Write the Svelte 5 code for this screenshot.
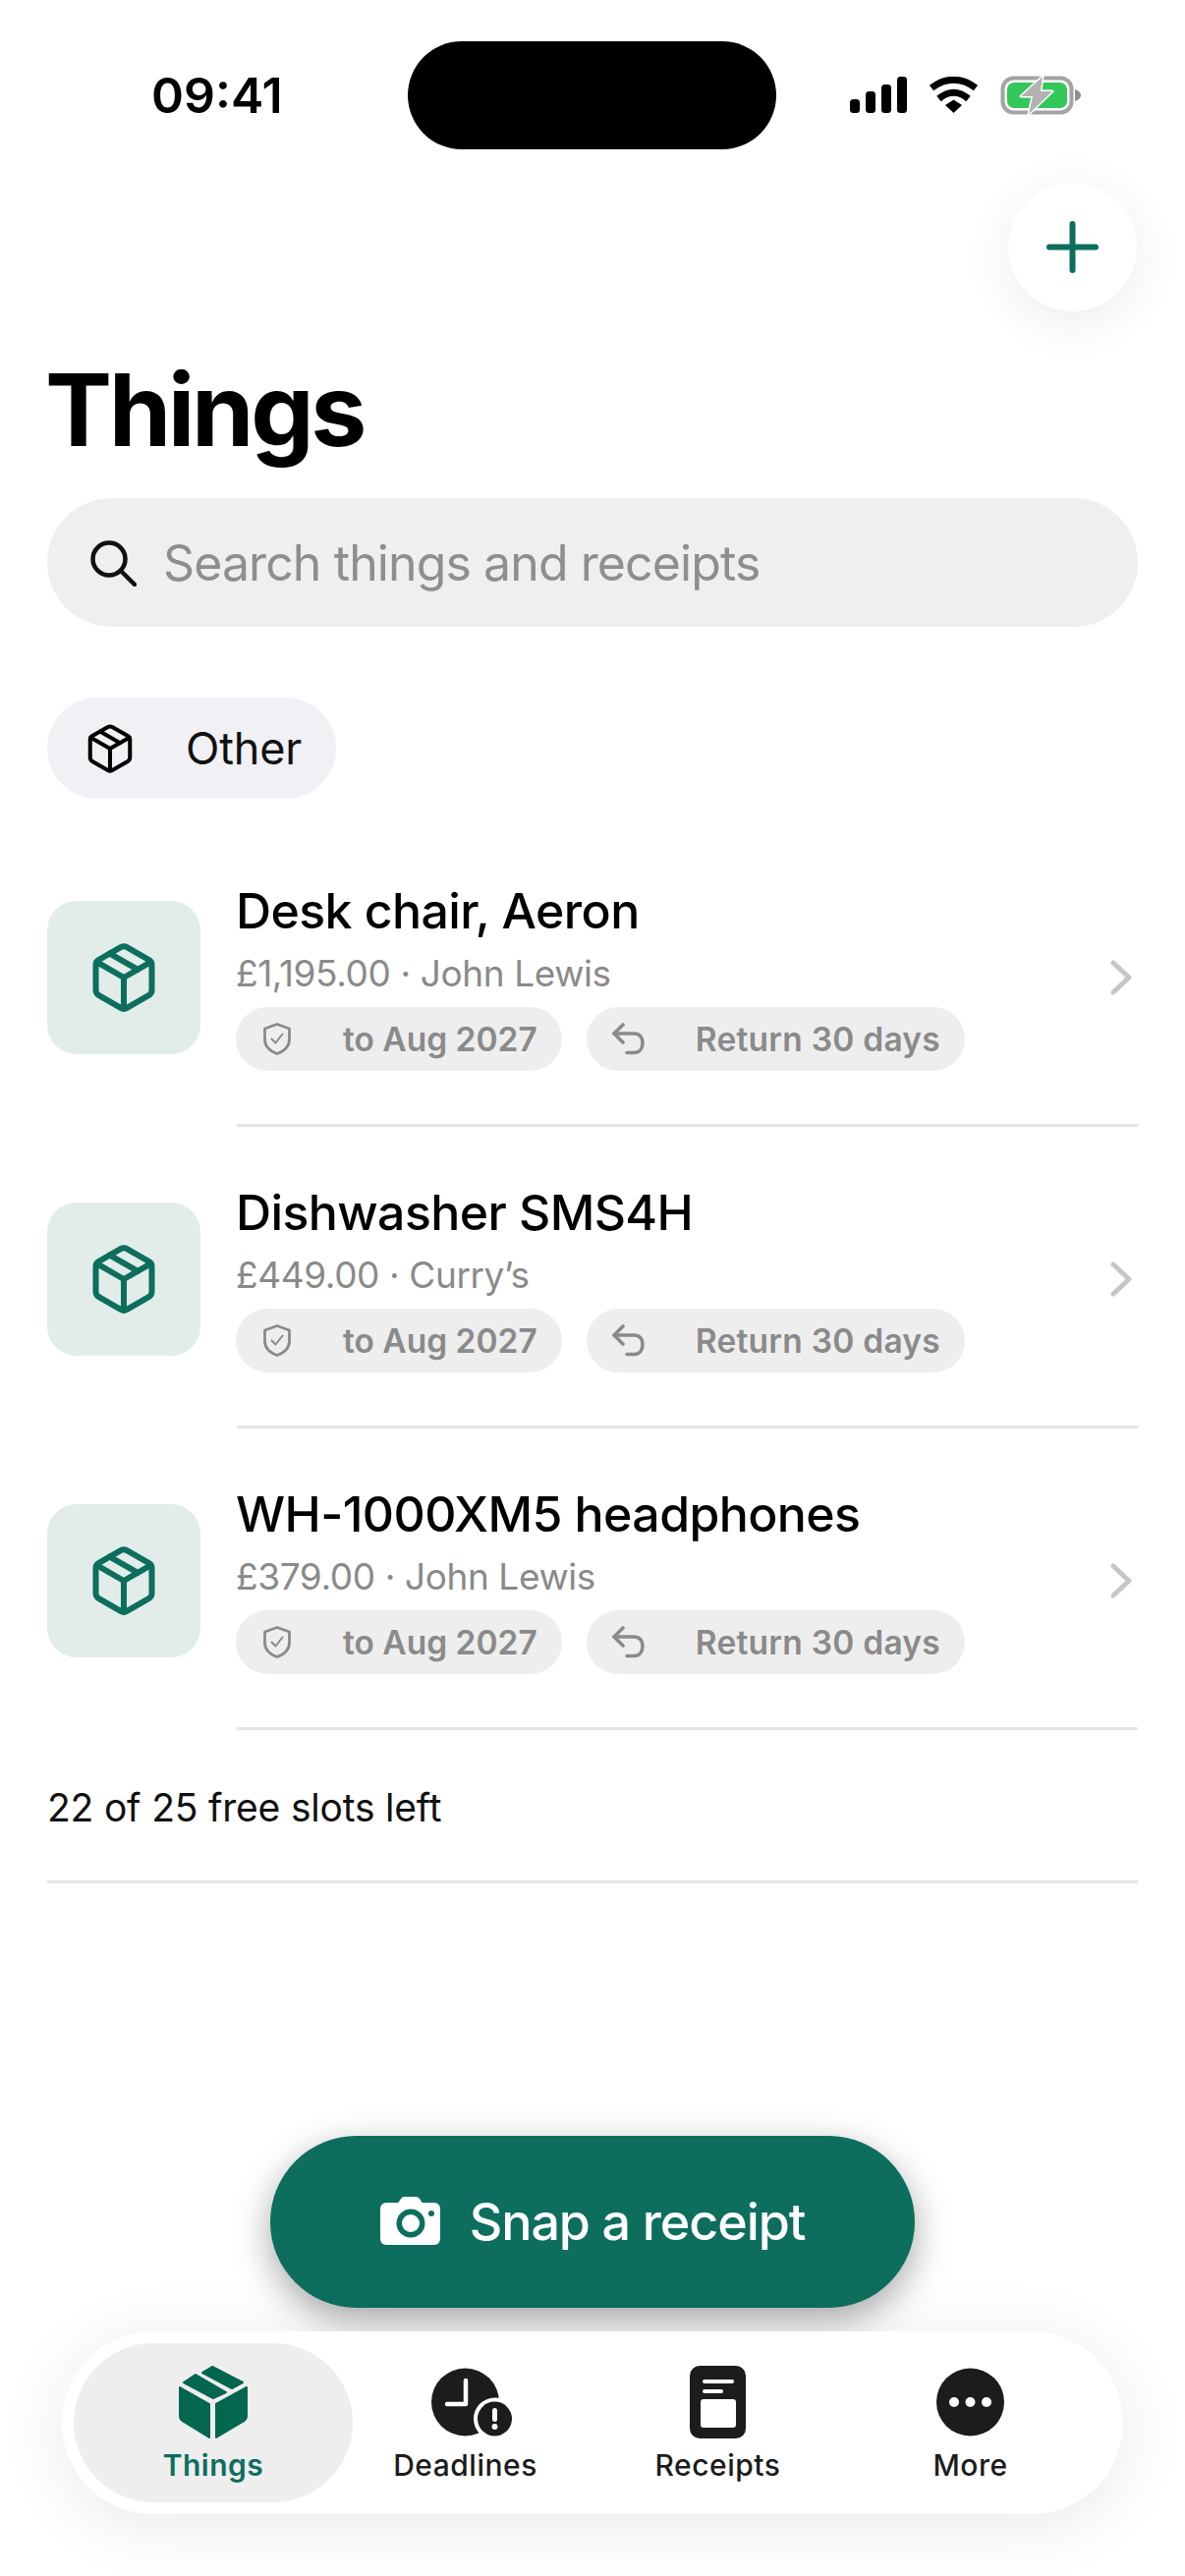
<script lang="ts">
  interface Thing {
    name: string;
    price: string;
    shop: string;
  }

  const things: Thing[] = [
    { name: 'Desk chair, Aeron', price: '£1,195.00', shop: 'John Lewis' },
    { name: 'Dishwasher SMS4H', price: '£449.00', shop: 'Curry’s' },
    { name: 'WH-1000XM5 headphones', price: '£379.00', shop: 'John Lewis' }
  ];
</script>

{#snippet box(cls: string)}
  <svg class={cls} viewBox="0 0 24 24" fill="none" stroke="currentColor" stroke-linecap="round" stroke-linejoin="round">
    <path d="M11 21.73a2 2 0 0 0 2 0l7-4A2 2 0 0 0 21 16V8a2 2 0 0 0-1-1.73l-7-4a2 2 0 0 0-2 0l-7 4A2 2 0 0 0 3 8v8a2 2 0 0 0 1 1.73z" />
    <path d="M12 22V12" />
    <path d="m3.3 7 8.7 5 8.7-5" />
    <path d="m7.5 4.27 9 5.15" />
  </svg>
{/snippet}

<div class="phone">
  <!-- Status bar -->
  <header class="status">
    <div class="time">09:41</div>
    <div class="island"></div>
    <div class="status-icons">
      <svg class="signal" viewBox="0 0 58 37" fill="#000">
        <rect x="0" y="23" width="10" height="14" rx="3.5" />
        <rect x="16" y="15" width="10" height="22" rx="3.5" />
        <rect x="32" y="8" width="10" height="29" rx="3.5" />
        <rect x="48" y="0" width="10" height="37" rx="3.5" />
      </svg>
      <svg class="wifi" viewBox="0 0 51 37" fill="none" stroke="#000" stroke-width="7">
        <path d="M3 11.5Q25.5 -5 48 11.5" />
        <path d="M10.5 22.5Q25.5 10 40.5 22.5" />
        <path d="M17 29 25.5 23.5 34 29 25.5 37Z" fill="#000" stroke="none" />
      </svg>
      <svg class="battery" viewBox="0 0 82 40">
        <rect x="2.5" y="2.5" width="70" height="35" rx="11" fill="none" stroke="#a3a3a3" stroke-width="4" />
        <rect x="7" y="7" width="61" height="26" rx="7" fill="#34c759" />
        <path d="M76 14Q82 16 82 20Q82 24 76 26Z" fill="#8f8f8f" />
        <path d="M43 1 21 21H33L29 39 53 16H41Z" fill="#b2b2b2" stroke="#fff" stroke-width="3" stroke-linejoin="round" paint-order="stroke" />
      </svg>
    </div>
  </header>

  <div class="top-actions">
    <button class="add" aria-label="Add">
      <svg viewBox="0 0 53 53" fill="none" stroke="currentColor" stroke-width="6" stroke-linecap="round">
        <path d="M26.5 3V50M3 26.5H50" />
      </svg>
    </button>
  </div>

  <h1 class="title">Things</h1>

  <div class="search">
    <svg viewBox="0 0 48 48" fill="none" stroke="#111" stroke-width="4.5" stroke-linecap="round">
      <circle cx="20" cy="20" r="16.5" />
      <path d="M32 32 46 46" />
    </svg>
    <span>Search things and receipts</span>
  </div>

  <div class="chip">
    {@render box('chip-icon')}
    <span>Other</span>
  </div>

  <!-- Things list -->
  <div class="list">
    {#each things as thing}
      <div class="row">
        <div class="row-main">
          <div class="thumb">{@render box('thumb-icon')}</div>
          <div class="info">
            <div class="name">{thing.name}</div>
            <div class="sub">{thing.price} · {thing.shop}</div>
            <div class="pills">
              <div class="pill">
                <svg viewBox="0 0 28 33" fill="none" stroke="currentColor" stroke-width="2.8" stroke-linejoin="round" stroke-linecap="round">
                  <path d="M14 1.5 26.5 6V17C26.5 24 21 29 14 31.5 7 29 1.5 24 1.5 17V6Z" />
                  <path d="M8.5 16.5 12.5 20.5 19.5 11.5" stroke-width="2" />
                </svg>
                <span>to Aug 2027</span>
              </div>
              <div class="pill return">
                <svg viewBox="0 0 34 33" fill="none" stroke="currentColor" stroke-width="3.6" stroke-linejoin="round" stroke-linecap="round">
                  <path d="M12 2 3 11 12 20" />
                  <path d="M3 11H23C29 11 32 15 32 20.5S29 30.5 23 30.5H16" />
                </svg>
                <span>Return 30 days</span>
              </div>
            </div>
          </div>
          <svg class="chevron" viewBox="0 0 22 36" fill="none" stroke="#c6c6c6" stroke-width="5" stroke-linecap="round" stroke-linejoin="round">
            <path d="M3 3 19 18 3 33" />
          </svg>
        </div>
        <div class="divider"></div>
      </div>
    {/each}
  </div>

  <div class="slots">22 of 25 free slots left</div>

  <!-- Bottom actions -->
  <div class="bottom">
    <button class="snap">
      <svg viewBox="0 0 61 49">
        <rect x="0" y="6" width="61" height="43" rx="6" fill="#fff" />
        <path d="M17 8 21 2Q22 0 25 0H36Q39 0 40 2L44 8Z" fill="#fff" />
        <circle cx="31" cy="27" r="14.5" fill="#0d6e5e" />
        <circle cx="31" cy="27" r="9" fill="#fff" />
        <circle cx="52" cy="17" r="3" fill="#0d6e5e" />
      </svg>
      <span>Snap a receipt</span>
    </button>

    <nav class="tabs">
      <div class="tab active">
        <svg class="t-things" viewBox="0 0 70 74" fill="#03664f" stroke="#03664f" stroke-width="2" stroke-linejoin="round">
          <path d="M24 7 34 1 65 17 54 23Z" />
          <path d="M5 17 17 9 48 27 35 33Z" />
          <path d="M1 22 31 39V73L5 57Q1 55 1 51Z" />
          <path d="M69 22 38 39V73L65 57Q69 55 69 51Z" />
        </svg>
        <span>Things</span>
      </div>
      <div class="tab">
        <svg class="t-clock" viewBox="0 0 69 70">
          <circle cx="34.5" cy="35" r="34.5" fill="#1c1c1c" />
          <path d="M35 13V37H16" fill="none" stroke="#fff" stroke-width="4.5" stroke-linecap="round" stroke-linejoin="round" />
          <circle cx="64.5" cy="52" r="21.5" fill="#fff" />
          <circle cx="64.5" cy="52" r="17.5" fill="#1c1c1c" />
          <rect x="62" y="41" width="5" height="14" rx="2.5" fill="#fff" />
          <circle cx="64.5" cy="60" r="3" fill="#fff" />
        </svg>
        <span>Deadlines</span>
      </div>
      <div class="tab">
        <svg class="t-receipt" viewBox="0 0 57 74">
          <rect x="0" y="0" width="57" height="74" rx="10" fill="#1c1c1c" />
          <rect x="13" y="14" width="32" height="4" rx="2" fill="#fff" />
          <rect x="13" y="24" width="21" height="4" rx="2" fill="#fff" />
          <rect x="11" y="34" width="36" height="29" rx="3" fill="#fff" />
        </svg>
        <span>Receipts</span>
      </div>
      <div class="tab">
        <svg class="t-more" viewBox="0 0 69 70">
          <circle cx="34.5" cy="35" r="34.5" fill="#1c1c1c" />
          <circle cx="18" cy="35" r="5" fill="#fff" />
          <circle cx="34.5" cy="35" r="5" fill="#fff" />
          <circle cx="51" cy="35" r="5" fill="#fff" />
        </svg>
        <span>More</span>
      </div>
    </nav>
  </div>
</div>

<style>
  :global(body) {
    margin: 0;
    background: #fff;
  }

  .phone {
    width: 1206px;
    height: 2622px;
    background: #fff;
    overflow: hidden;
    display: flex;
    flex-direction: column;
    font-family: Inter, 'Noto Sans', sans-serif;
    color: #000;
  }

  /* Status bar */
  .status {
    display: flex;
    align-items: center;
    height: 110px;
    margin-top: 42px;
    flex: none;
  }

  .time {
    width: 415px;
    box-sizing: border-box;
    padding-left: 154px;
    font-size: 50px;
    font-weight: 600;
    line-height: 1;
  }

  .island {
    width: 375px;
    height: 110px;
    border-radius: 55px;
    background: #000;
  }

  .status-icons {
    display: flex;
    align-items: flex-start;
    margin-left: 75px;
  }

  .signal {
    width: 58px;
    height: 37px;
  }

  .wifi {
    width: 51px;
    height: 37px;
    margin-left: 22px;
  }

  .battery {
    width: 82px;
    height: 40px;
    margin-left: 22px;
    margin-top: -1px;
  }

  .top-actions {
    display: flex;
    justify-content: flex-end;
    padding: 34px 49px 0 0;
  }

  .add {
    width: 131px;
    height: 131px;
    border: none;
    border-radius: 50%;
    background: #fff;
    color: #0d6e5e;
    padding: 0;
    display: flex;
    align-items: center;
    justify-content: center;
    box-shadow: 0 10px 50px rgba(0, 0, 0, 0.08);
  }

  .add svg {
    width: 53px;
    height: 53px;
  }

  .title {
    margin: 38px 0 0 46px;
    font-size: 102px;
    font-weight: 700;
    line-height: 124px;
    letter-spacing: -3.4px;
  }

  .search {
    margin: 28px 48px 0;
    height: 131px;
    border-radius: 66px;
    background: #efefef;
    display: flex;
    align-items: center;
    flex: none;
  }

  .search svg {
    width: 48px;
    height: 48px;
    margin-left: 43px;
  }

  .search span {
    margin-left: 27px;
    font-size: 50px;
    letter-spacing: -0.9px;
    color: #8e8e8e;
  }

  .chip {
    margin: 72px 0 0 48px;
    width: 294px;
    height: 103px;
    border-radius: 52px;
    background: #f1f1f5;
    display: flex;
    align-items: center;
    flex: none;
  }

  .chip span {
    margin-left: 50px;
    font-size: 45px;
    letter-spacing: -0.2px;
    color: #111;
  }

  :global(.chip-icon) {
    width: 54px;
    height: 54px;
    margin-left: 37px;
    stroke-width: 1.8;
  }

  /* Rows */
  .list {
    margin: 27px 48px 0;
  }

  .row-main {
    display: flex;
    align-items: center;
    padding: 59px 0 54px;
  }

  .thumb {
    width: 156px;
    height: 156px;
    border-radius: 30px;
    background: #e2edea;
    color: #0d6e5e;
    display: flex;
    align-items: center;
    justify-content: center;
    flex: none;
  }

  :global(.thumb-icon) {
    width: 76px;
    height: 76px;
    stroke-width: 1.9;
  }

  .info {
    margin-left: 36px;
  }

  .name {
    font-size: 50px;
    line-height: 56px;
    font-weight: 500;
    letter-spacing: -0.6px;
  }

  .sub {
    font-size: 37px;
    line-height: 44px;
    margin-top: 14px;
    letter-spacing: -0.4px;
    color: #8a8a8a;
  }

  .pills {
    display: flex;
    gap: 25px;
    margin-top: 12px;
  }

  .pill {
    height: 65px;
    border-radius: 33px;
    background: #eeeeee;
    color: #8a8a8a;
    display: flex;
    align-items: center;
    padding: 0 25px;
    font-size: 33.5px;
    font-weight: 600;
  }

  .pill svg {
    width: 34px;
    height: 33px;
    margin-right: 50px;
  }

  .pill.return {
    letter-spacing: 0.25px;
  }

  .pill.return svg {
    margin-right: 52px;
  }

  .chevron {
    width: 22px;
    height: 36px;
    margin-left: auto;
    margin-right: 6px;
  }

  .divider {
    height: 3px;
    margin-left: 193px;
    background: #e5e5e5;
  }

  .slots {
    margin: 54px 48px 0;
    padding-bottom: 49px;
    border-bottom: 3px solid #e5e5e5;
    font-size: 39px;
    line-height: 50px;
    letter-spacing: -0.2px;
    color: #111;
  }

  /* Bottom */
  .bottom {
    margin-top: auto;
    padding-bottom: 63px;
    display: flex;
    flex-direction: column;
    align-items: center;
  }

  .snap {
    width: 656px;
    height: 175px;
    border: none;
    border-radius: 88px;
    background: #0d6e5e;
    color: #fff;
    display: flex;
    align-items: center;
    justify-content: center;
    padding: 0;
    font-family: inherit;
    font-size: 52px;
    font-weight: 500;
    letter-spacing: -1.1px;
    box-shadow: 0 12px 36px rgba(0, 0, 0, 0.35);
  }

  .snap svg {
    width: 61px;
    height: 49px;
    margin-right: 30px;
    margin-top: -2px;
  }

  .tabs {
    position: relative;
    margin-top: 24px;
    width: 1080px;
    height: 186px;
    box-sizing: border-box;
    border-radius: 93px;
    background: #fff;
    box-shadow: 0 10px 70px rgba(0, 0, 0, 0.09);
    display: grid;
    grid-template-columns: repeat(4, 257px);
    padding: 12px 0 12px 25px;
  }

  .tab {
    display: flex;
    flex-direction: column;
    align-items: center;
    padding-top: 23px;
    font-size: 30px;
    font-weight: 500;
    color: #1c1c1c;
    letter-spacing: 0.5px;
  }

  .tab span {
    position: absolute;
    top: 116px;
    line-height: 40px;
  }

  .tab.active {
    margin: 0 -14px 0 -13px;
    border-radius: 81px;
    background: #eeeeee;
    color: #0d6e5e;
    font-weight: 600;
  }

  .tab svg {
    display: block;
    overflow: visible;
  }

  .t-things {
    width: 70px;
    height: 74px;
  }

  .t-clock,
  .t-more {
    width: 69px;
    height: 70px;
    margin-top: 2px;
  }

  .t-receipt {
    width: 57px;
    height: 74px;
  }
</style>
